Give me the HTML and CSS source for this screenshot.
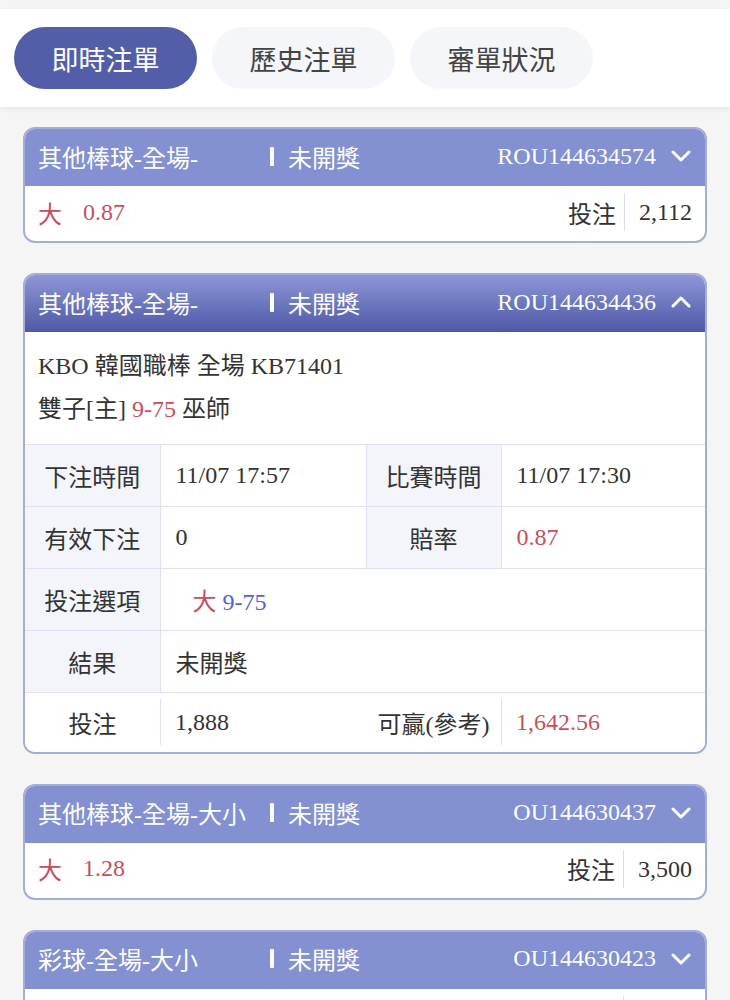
FILE: index.html
```html
<!DOCTYPE html>
<html lang="zh-Hant">
<head>
<meta charset="utf-8">
<title>注單</title>
<link rel="stylesheet" href="styles.css">
</head>
<body>
<div class="topbar">
  <div class="tab active">即時注單</div>
  <div class="tab">歷史注單</div>
  <div class="tab">審單狀況</div>
</div>

<main class="list">
  <section class="card">
    <header class="card-head">
      <span class="title">其他棒球-全場-</span>
      <span class="bar"></span>
      <span class="status">未開獎</span>
      <span class="oid">ROU144634574</span>
      <svg class="chev" viewBox="0 0 20 12" width="20" height="12"><path d="M2 2 L10 10 L18 2" fill="none" stroke="#fff" stroke-width="3" stroke-linecap="round" stroke-linejoin="round"/></svg>
    </header>
    <div class="summary">
      <span class="red pick">大</span><span class="red odds">0.87</span>
      <span class="amt-label">投注</span><span class="amt">2,112</span>
    </div>
  </section>

  <section class="card">
    <header class="card-head open">
      <span class="title">其他棒球-全場-</span>
      <span class="bar"></span>
      <span class="status">未開獎</span>
      <span class="oid">ROU144634436</span>
      <svg class="chev" viewBox="0 0 20 12" width="20" height="12"><path d="M2 10 L10 2 L18 10" fill="none" stroke="#fff" stroke-width="3" stroke-linecap="round" stroke-linejoin="round"/></svg>
    </header>
    <div class="match">
      <div>KBO 韓國職棒 全場 KB71401</div>
      <div>雙子[主] <span class="red">9-75</span> 巫師</div>
    </div>
    <table class="detail">
      <colgroup><col class="c1"><col class="c2"><col class="c3"><col class="c4"></colgroup>
      <tr>
        <th>下注時間</th><td>11/07 17:57</td>
        <th>比賽時間</th><td>11/07 17:30</td>
      </tr>
      <tr>
        <th>有效下注</th><td>0</td>
        <th>賠率</th><td class="red">0.87</td>
      </tr>
      <tr>
        <th>投注選項</th><td colspan="3"><span class="opt"><span class="red">大</span> <span class="blue">9-75</span></span></td>
      </tr>
      <tr>
        <th>結果</th><td colspan="3">未開獎</td>
      </tr>
      <tr class="last">
        <th>投注</th><td class="split">1,888</td>
        <th>可贏(參考)</th><td class="split red">1,642.56</td>
      </tr>
    </table>
  </section>

  <section class="card">
    <header class="card-head">
      <span class="title">其他棒球-全場-大小</span>
      <span class="bar"></span>
      <span class="status">未開獎</span>
      <span class="oid">OU144630437</span>
      <svg class="chev" viewBox="0 0 20 12" width="20" height="12"><path d="M2 2 L10 10 L18 2" fill="none" stroke="#fff" stroke-width="3" stroke-linecap="round" stroke-linejoin="round"/></svg>
    </header>
    <div class="summary">
      <span class="red pick">大</span><span class="red odds">1.28</span>
      <span class="amt-label">投注</span><span class="amt">3,500</span>
    </div>
  </section>

  <section class="card">
    <header class="card-head">
      <span class="title">彩球-全場-大小</span>
      <span class="bar"></span>
      <span class="status">未開獎</span>
      <span class="oid">OU144630423</span>
      <svg class="chev" viewBox="0 0 20 12" width="20" height="12"><path d="M2 2 L10 10 L18 2" fill="none" stroke="#fff" stroke-width="3" stroke-linecap="round" stroke-linejoin="round"/></svg>
    </header>
    <div class="summary">
      <span class="red pick">小</span><span class="red odds">0.92</span>
      <span class="amt-label">投注</span><span class="amt">1,000</span>
    </div>
  </section>
</main>
</body>
</html>
```

FILE: styles.css
```css
* { box-sizing: border-box; }

html, body {
  margin: 0;
  padding: 0;
  background: #f5f5f5;
  font-family: "Liberation Serif", "Noto Sans CJK TC", serif;
  color: #333;
  font-size: 24px;
}

.topbar {
  margin-top: 9px;
  height: 98px;
  background: #fff;
  display: flex;
  align-items: center;
  gap: 15px;
  padding: 0 14px;
  box-shadow: 0 2px 6px rgba(0, 0, 0, 0.06);
}

.tab {
  width: 183px;
  height: 62px;
  border-radius: 31px;
  background: #f5f6fa;
  color: #444;
  font-family: "Noto Sans CJK TC", sans-serif;
  font-size: 27px;
  display: flex;
  align-items: center;
  justify-content: center;
}

.tab.active {
  background: #535ea8;
  color: #fff;
}

.list {
  display: flex;
  flex-direction: column;
  gap: 30px;
  padding: 20px 23px;
}

.card {
  background: #fff;
  border: 2px solid #a6acda;
  border-radius: 12px;
  overflow: hidden;
}

.card-head {
  height: 57px;
  background: #8390d1;
  color: #fff;
  display: flex;
  align-items: center;
  padding: 0 14px 3px 13px;
}

.card-head.open {
  background: linear-gradient(#8d97d7, #4e58a6);
}

.title {
  width: 232px;
  flex-shrink: 0;
  white-space: nowrap;
}

.bar {
  width: 4px;
  height: 19px;
  background: #fff;
  border-radius: 1px;
  margin-right: 14px;
}

.oid {
  margin-left: auto;
}

.chev {
  margin-left: 15px;
  display: block;
}

.summary {
  height: 55px;
  display: flex;
  align-items: center;
  padding: 0 13px 3px 13px;
}

.pick { margin-right: 21px; }

.amt-label {
  margin-left: auto;
  padding-right: 8px;
}

.amt {
  border-left: 1px solid #dcdde6;
  padding-left: 14px;
  line-height: 38px;
}

.red { color: #c4505c; }
.blue { color: #4f62d6; }

.match {
  padding: 13px 13px 13px;
  line-height: 43px;
}

.detail {
  width: 100%;
  border-collapse: collapse;
  table-layout: fixed;
}

.detail col.c1 { width: 135px; }
.detail col.c2 { width: 206px; }
.detail col.c3 { width: 135px; }
.detail col.c4 { width: 204px; }

.detail th,
.detail td {
  height: 62px;
  padding: 0;
  border: 1px solid #dfe1f2;
  font-weight: normal;
  vertical-align: middle;
}

.detail th:first-child { border-left: none; }
.detail td:last-child { border-right: none; }

.detail th {
  background: #f4f5fb;
  text-align: center;
}

.detail td {
  padding-left: 15px;
  background: #fff;
}

.opt { padding-left: 17px; }

.detail tr.last th,
.detail tr.last td {
  background-color: #fff;
  border: none;
  height: 59px;
}

.detail tr.last td.split {
  background-image: linear-gradient(#dfe1f2, #dfe1f2);
  background-repeat: no-repeat;
  background-size: 1px 46px;
  background-position: left center;
}
```
